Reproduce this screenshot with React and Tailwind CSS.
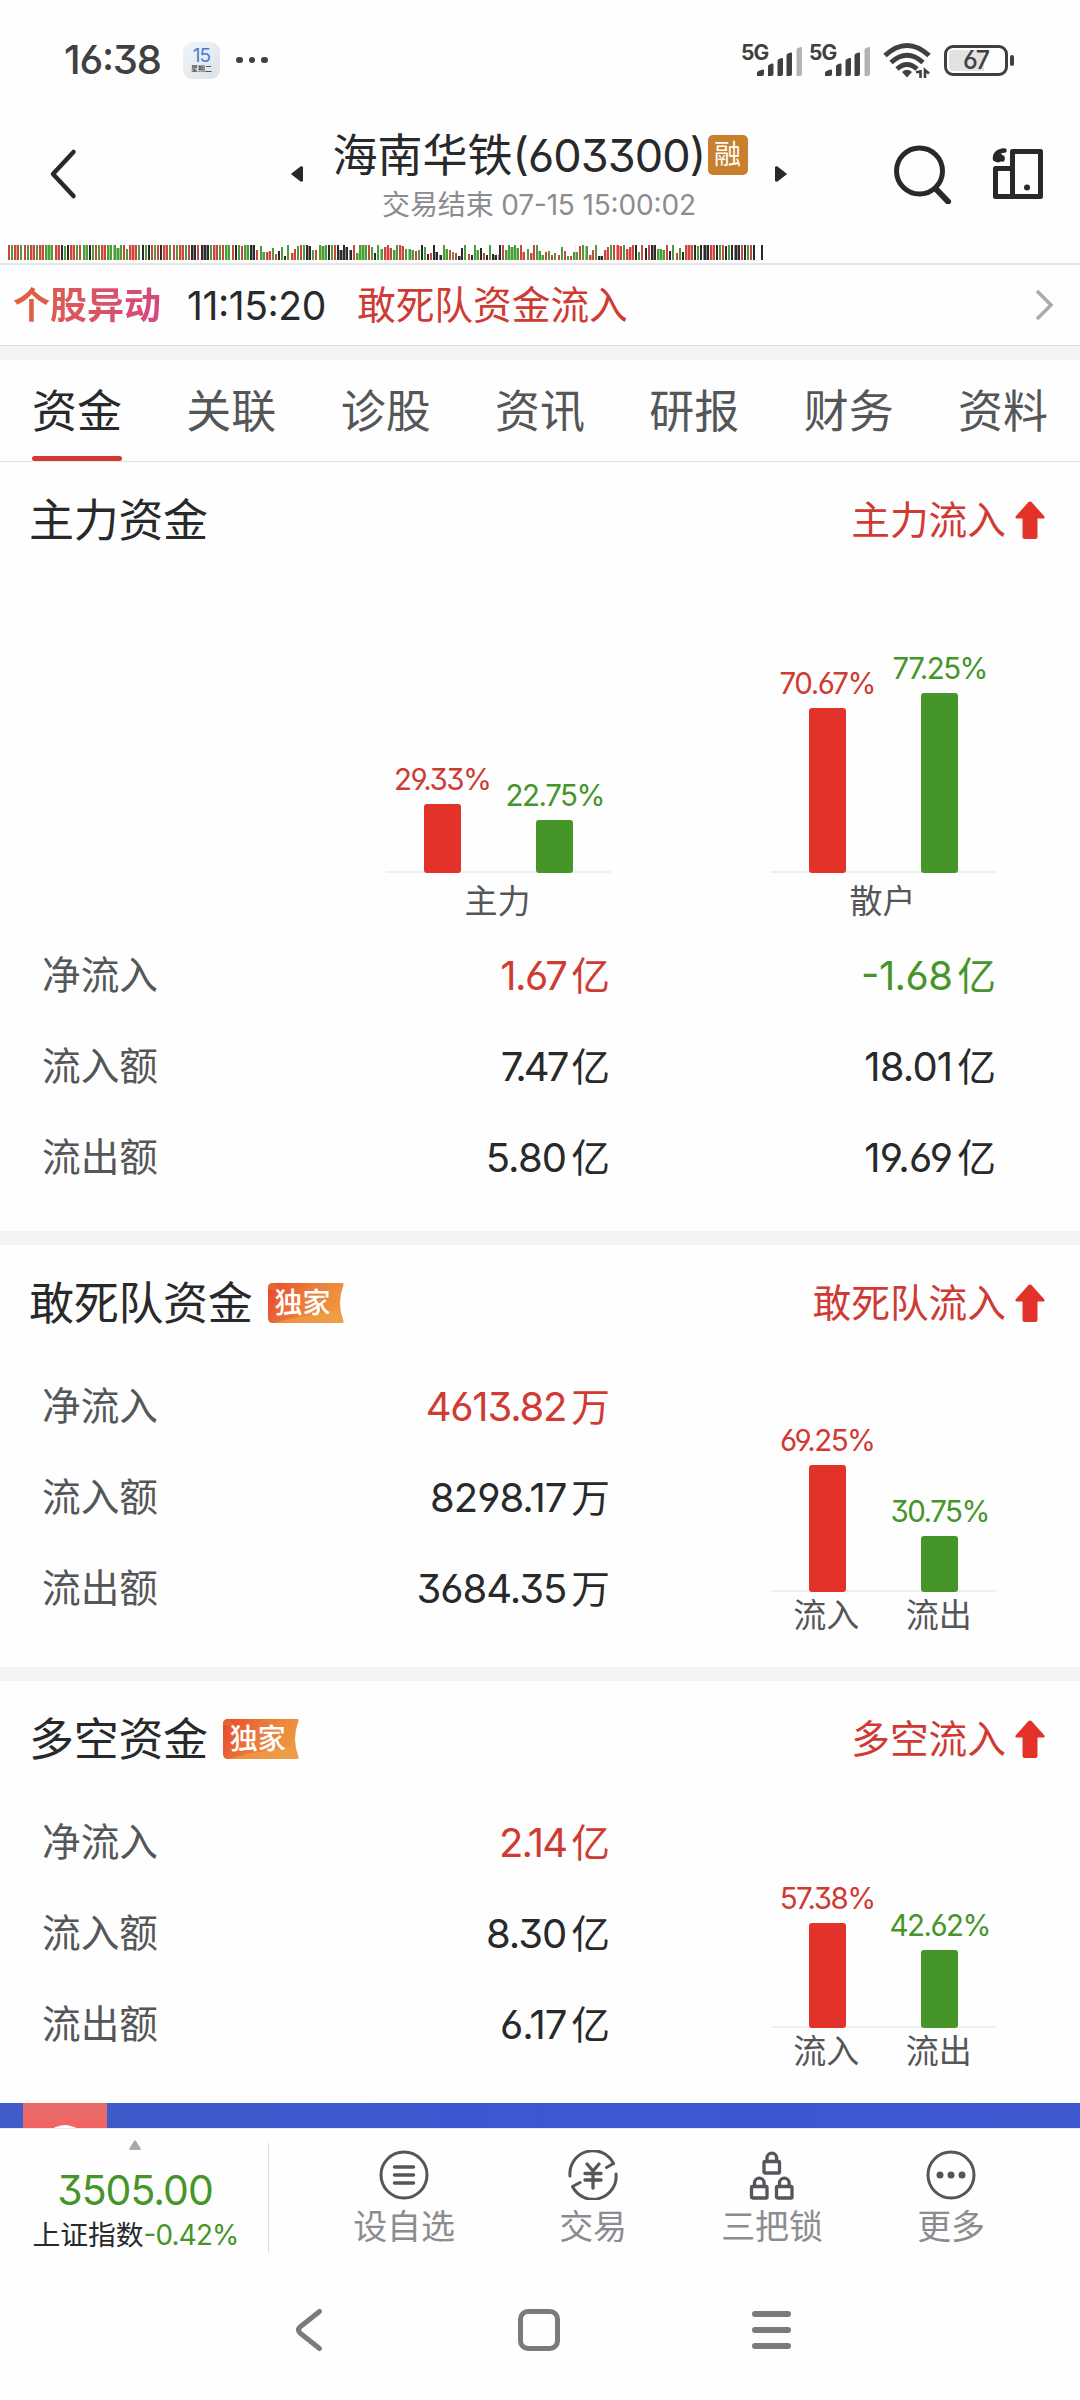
import { Fragment } from 'react'

const TABS = ['资金', '关联', '诊股', '资讯', '研报', '财务', '资料']

// one tick per trading minute: colour letter + height
const TICKS =
  'r15g15r15r15g15r15g15r15r15g15r15r15g15g15g15r15r15k15g14k15r15r15g15r15g15g15k15g15r15g15r15r15g15g15g15g12g15r15g11r15r15r15g15k15g15k15r15g15r15k15r15r15g15r15g15r15r15g15r15k15k15r15k15k15k15g15r15r15g15r15g15g15r15k15g15r14g15g15k15k15' +
  'r10g14g8r8r9g12r6k9g13k4g15r7r11g14r15g15k15k14g10r10g15g14g15k15g15r15k15k10k15k13k10r15g7g15g15g15r15g13k7g15g11r13r15r12g10g15r15r14g11g11g10r9g10k15g13k6r7k15k8k5g15g11r10g8r7k4k12g15r6k5g15g10k12r7k5g15k6k5k15r15g10g15g13g15g12r15r8g11r7r15g15g9g5r8g9r5g7r5g13r9g4r4g8g8r14g15g14r5r10g15k4k4r10r13g15r15r15r14g15r11r13r15k15g8r15k12r15k15k15g11g11g10r15k9g15r7g12k8' +
  'r15r15r15k15g14k15k15k15r15r15k15g15r15k14g15k15k15k15r15k15g15r15k15'

const TICK_COLORS = { r: '#c8483f', g: '#4f9a3c', k: '#2b2b2d' }
const TICK_SOFT = { r: '#f39a96', g: '#93d084', k: '#8d8d90' }

const SECTIONS = [
  {
    title: '敢死队资金',
    flow: '敢死队流入',
    rows: [
      ['净流入', '4613.82', '万', 'text-[#cf3b33] tracking-[-1.2px]'],
      ['流入额', '8298.17', '万', 'text-[#28292a] tracking-[-1px]'],
      ['流出额', '3684.35', '万', 'text-[#28292a] tracking-[-1px]'],
    ],
    bars: [
      { label: '流入', value: '69.25%', height: 127, up: true },
      { label: '流出', value: '30.75%', height: 56, up: false },
    ],
  },
  {
    title: '多空资金',
    flow: '多空流入',
    rows: [
      ['净流入', '2.14', '亿', 'text-[#cf3b33] tracking-[-1.8px]'],
      ['流入额', '8.30', '亿', 'text-[#28292a] tracking-[-1px]'],
      ['流出额', '6.17', '亿', 'text-[#28292a] tracking-[-1px]'],
    ],
    bars: [
      { label: '流入', value: '57.38%', height: 105, up: true },
      { label: '流出', value: '42.62%', height: 78, up: false },
    ],
  },
]

const MAIN_ROWS = [
  ['净流入', ['1.67', 'text-[#cf3b33] tracking-[-1.5px]'], ['-1.68', 'text-[#459529] tracking-[-0.6px]']],
  ['流入额', ['7.47', 'text-[#28292a] tracking-[-3px]'], ['18.01', 'text-[#28292a] tracking-[-0.8px]']],
  ['流出额', ['5.80', 'text-[#28292a] tracking-[-0.8px]'], ['19.69', 'text-[#28292a] tracking-[-0.8px]']],
]

const Signal = () => (
  <div className="relative h-[34px] w-[62px]">
    <span className="absolute -top-px left-0 text-[21px] leading-none font-bold tracking-[-1px]">5G</span>
    <svg className="absolute bottom-0 left-0" width="62" height="34" viewBox="0 0 62 34">
      <path d="M16 33v-3q0-1.500 1.500-2l4-1.500q1.500-.5 1.500 1V31q0 2-2 2z" fill="currentColor" />
      <path d="M27 33v-9.500q0-1.500 1.500-2l2.500-1q1.500-.5 1.500 1V31q0 2-2 2z" fill="currentColor" />
      <path d="M36.500 33V18q0-1.500 1.500-2l2.500-1q1.500-.5 1.500 1v15q0 2-2 2z" fill="currentColor" />
      <path d="M45.500 33V12.500q0-1.500 1.500-2l2.500-1q1.500-.5 1.500 1V31q0 2-2 2z" fill="currentColor" />
      <path d="M55.500 33V7q0-1.500 1.500-2l2.500-1q1.500-.5 1.500 1v26q0 2-2 2z" fill="#b3b3b3" />
    </svg>
  </div>
)

const StatusBar = () => (
  <div className="flex h-[120px] items-center justify-between pr-[66px] pl-[64px] text-[#404040]">
    <div className="flex items-center">
      <span className="w-[119px] text-[40px] leading-none font-medium tracking-[-1.2px]">16:38</span>
      <div className="flex size-[37px] flex-col items-center justify-center rounded-[9px] bg-gradient-to-br from-[#f1f5f8] to-[#dbe3e9]">
        <span className="text-[19px] leading-[18px] tracking-[-1px] text-[#4a7bd0]">15</span>
        <span className="text-[7px] leading-[8px] font-medium text-[#333]">星期二</span>
      </div>
      <div className="ml-[16px] flex gap-[6px]">
        <i className="size-[6.500px] rounded-full bg-[#404040]" />
        <i className="size-[6.500px] rounded-full bg-[#404040]" />
        <i className="size-[6.500px] rounded-full bg-[#404040]" />
      </div>
    </div>
    <div className="flex items-center">
      <div className="flex gap-[6px]">
        <Signal />
        <Signal />
      </div>
      <svg className="ml-[12px]" width="48" height="36" viewBox="0 0 48 36" fill="none" stroke="currentColor" strokeWidth="5">
        <path d="M2 13.500Q24-6.500 46 13.500" />
        <path d="M8 20.500Q24 6 40 20.500" />
        <path d="M14 27Q24 18 34 27" />
        <path d="M19 30Q24 25.500 29 30L24 35.500Z" fill="currentColor" stroke="none" />
        <path d="M33 30h4.500v5M37.500 28v8M42 36v-8l4 3.500" strokeWidth="2.600" />
      </svg>
      <div className="ml-[13px] flex items-center gap-[2px]">
        <div className="relative flex h-[31px] w-[64px] items-center justify-center rounded-[9px] border-[3.500px] border-[#404040]">
          <div className="absolute inset-y-[2px] left-[2px] w-[35px] rounded-l-[4px] bg-[#e2e2e2]" />
          <span className="relative text-[25px] leading-none font-medium tracking-[-1px]">67</span>
        </div>
        <div className="h-[11px] w-[4px] rounded-[2px] bg-[#404040]" />
      </div>
    </div>
  </div>
)

const Header = () => (
  <div className="flex h-[108px] items-center justify-between pr-[36px] pl-[49px] text-[#28292a]">
    <svg width="30" height="52" viewBox="0 0 30 52" fill="none" stroke="currentColor" strokeWidth="4.500" strokeLinecap="round" strokeLinejoin="round">
      <path d="M24.500 4L4 26l20.500 22" />
    </svg>
    <div className="ml-[105px] flex items-center">
      <svg className="mr-[30px]" width="12" height="16" viewBox="0 0 12 16" fill="currentColor">
        <path d="M12 1v14q-1 1-2.500.5L.5 8.500q-.5-.5 0-1l9-7Q11-.2 12 1z" />
      </svg>
      <div className="flex flex-col items-center pt-[5px]">
        <div className="flex h-[42px] items-center">
          <h1 className="w-[375px] text-[45px] leading-none whitespace-nowrap">
            海南华铁<span className="tracking-[-0.9px]">(603300)</span>
          </h1>
          <span className="mb-[2px] flex size-[40px] items-center justify-center rounded-[5px] bg-[#c8802f] text-[27px] leading-none text-white">融</span>
        </div>
        <p className="mt-[14px] mr-[2px] text-[28px] leading-none tracking-[-0.15px] whitespace-nowrap text-[#8c8c90]">交易结束 07-15 15:00:02</p>
      </div>
      <svg className="ml-[27px]" width="12" height="16" viewBox="0 0 12 16" fill="currentColor">
        <path d="M0 1v14q1 1 2.500.5l9-7q.5-.5 0-1l-9-7Q1-.2 0 1z" />
      </svg>
    </div>
    <div className="flex items-center gap-[40px]">
      <svg width="59" height="60" viewBox="0 0 59 60" fill="none" stroke="currentColor" strokeWidth="5">
        <circle cx="26.500" cy="27" r="23" />
        <path d="M43 45l12 12.500" strokeWidth="6" strokeLinecap="round" />
      </svg>
      <svg width="52" height="52" viewBox="0 0 52 52" fill="none" stroke="currentColor" strokeWidth="5" strokeLinejoin="round">
        <path d="M20.500 3.500h28v45h-28z" />
        <path d="M20.500 20.500h-17v28h17" />
        <path d="M3 11Q3 3 12.500 2.500" strokeWidth="4.500" strokeLinecap="round" />
        <circle cx="6" cy="9.500" r="5" fill="currentColor" stroke="none" />
        <path d="M10.500 9.500v2" strokeWidth="4.500" strokeLinecap="round" />
        <circle cx="35" cy="39.500" r="3" fill="currentColor" stroke="none" />
      </svg>
    </div>
  </div>
)

const ticks = TICKS.match(/[rgk]\d+/g).map((t, i) => ({
  x: 8 + Math.round(i * 3.105),
  kind: t[0],
  h: Number(t.slice(1)),
}))

const TickStrip = () => (
  <div className="h-[37px] border-b-2 border-[#e5e5e5] pt-[17px]">
    <svg className="block" width="1080" height="18" shapeRendering="crispEdges">
      <path d="M195.500 15v3M385.500 15v3M575.500 0v18M753 15h8" stroke="#ececec" />
      {ticks.map(({ x, kind, h }, i) => {
        const prev = ticks[i - 1]
        const joined = prev && prev.kind === kind
        return (
          <Fragment key={i}>
            {joined && <rect x={x - 1} y={15 - Math.min(h, prev.h)} width="1" height={Math.min(h, prev.h)} fill={TICK_SOFT[kind]} />}
            <rect x={x} y={15 - h} width="2" height={h} fill={TICK_COLORS[kind]} />
          </Fragment>
        )
      })}
      <rect x="761" y="0" width="2" height="15" fill={TICK_COLORS.k} />
    </svg>
  </div>
)

const Alert = () => (
  <div className="flex h-[81px] items-center border-b border-[#dedede] pl-[13px]">
    <span className="mt-[2px] w-[174px] bg-gradient-to-r from-[#e0603a] to-[#d5487f] to-[146px] bg-clip-text text-[37px] leading-[48px] font-bold text-transparent">个股异动</span>
    <span className="mt-px w-[170px] text-[39px] leading-none tracking-[-0.4px] text-[#28292a]">11:15:20</span>
    <span className="mt-px text-[38.700px] leading-none text-[#cf3b33]">敢死队资金流入</span>
    <svg className="mr-[26px] ml-auto" width="20" height="34" viewBox="0 0 20 34" fill="none" stroke="#aaa" strokeWidth="3.500">
      <path d="M3 3l14 14L3 31" />
    </svg>
  </div>
)

const Tabs = () => (
  <div className="flex h-[102px] justify-between border-b border-[#e2e2e2] px-8">
    {TABS.map((t, i) => (
      <div
        key={t}
        className={
          i === 0
            ? 'relative flex items-center pt-px text-[45px] leading-none text-[#28292a]'
            : 'flex items-center pt-px text-[45px] leading-none text-[#555657]'
        }
      >
        {t}
        {i === 0 && <div className="absolute bottom-0 left-0 h-[5px] w-full rounded-full bg-[#d03a31]" />}
      </div>
    ))}
  </div>
)

const UpArrow = () => (
  <svg className="-mt-px ml-[9px]" width="30" height="38" viewBox="0 0 30 38" fill="#e23229">
    <path d="M13.500 1q1.500-1.200 3 0l12.500 14q1.500 2-.5 2.500H22.500V36q0 2-2 2h-11q-2 0-2-2V17.500H1.500Q-.5 17 1 15z" />
  </svg>
)

const Badge = () => (
  <div className="relative ml-[15px] h-[40px] w-[76px]">
    <svg className="absolute inset-0" width="76" height="40" viewBox="0 0 76 40">
      <defs>
        <linearGradient id="badge" x1="0" y1="0.200" x2="1" y2="0.500">
          <stop offset="0" stopColor="#e94b2d" />
          <stop offset="0.500" stopColor="#ea7c3b" />
          <stop offset="1" stopColor="#ee983f" />
        </linearGradient>
      </defs>
      <path d="M5 0h69q2 0 1.500 2-7 18 0 36 .5 2-1.500 2H5q-5 0-5-5V5q0-5 5-5z" fill="url(#badge)" />
      <path d="M0 6Q0 0 6 0l8 8z" fill="#e2662f" />
      <path d="M5 40l20-5 45-8 5 13z" fill="#f0a24a" opacity="0.600" />
    </svg>
    <span className="relative block pl-[7px] text-[28px] leading-[41px] font-medium text-white">独家</span>
  </div>
)

const SectionHeader = ({ title, flow, exclusive }) => (
  <div className="flex h-[116px] items-center pr-[35px] pl-[29px]">
    <h2 className="text-[45px] leading-none tracking-[-0.300px] text-[#28292a]">{title}</h2>
    {exclusive && <Badge />}
    <span className="ml-auto text-[38.700px] leading-none text-[#cf3b33]">{flow}</span>
    <UpArrow />
  </div>
)

const Bar = ({ value, height, up }) => (
  <div className="flex w-1/2 flex-col items-center">
    <span className={up ? 'mb-[10px] text-[29.500px] leading-[30px] tracking-[-1.500px] text-[#cf3b33]' : 'mb-[10px] text-[29.500px] leading-[30px] tracking-[-1.500px] text-[#459529]'}>
      {value}
    </span>
    <div className={up ? 'w-[37px] rounded-[3px] bg-[#e23229]' : 'w-[37px] rounded-[3px] bg-[#459529]'} style={{ height }} />
  </div>
)

const BarPair = ({ bars }) => (
  <div className="flex w-[225px] items-end bg-[linear-gradient(#efefef,#efefef)] bg-[length:100%_2px] bg-bottom bg-no-repeat">
    {bars.map((b) => (
      <Bar key={b.value} {...b} />
    ))}
  </div>
)

const Amount = ({ num, unit, color }) => (
  <span>
    <span className={`text-[40px] ${color}`}>{num}</span>
    <span className={`ml-[5px] text-[38.700px] ${color}`}>
      <span className="tracking-normal">{unit}</span>
    </span>
  </span>
)

const MainFunds = () => (
  <section className="h-[769px]">
    <SectionHeader title="主力资金" flow="主力流入" />
    <div className="flex h-[352px] items-end gap-[160px] pb-[12px] pl-[386px]">
      <div>
        <BarPair
          bars={[
            { value: '29.33%', height: 69, up: true },
            { value: '22.75%', height: 53, up: false },
          ]}
        />
        <p className="mt-[10px] h-[35px] pr-[2px] text-center text-[33px] leading-[36px] text-[#555657]">主力</p>
      </div>
      <div>
        <BarPair
          bars={[
            { value: '70.67%', height: 165, up: true },
            { value: '77.25%', height: 180, up: false },
          ]}
        />
        <p className="mt-[10px] h-[35px] pr-[2px] text-center text-[33px] leading-[36px] text-[#555657]">散户</p>
      </div>
    </div>
    {MAIN_ROWS.map(([label, main, retail]) => (
      <div key={label} className="flex h-[91px] items-center pl-[42px] leading-none">
        <span className="w-[200px] text-[38.700px] text-[#555657]">{label}</span>
        <div className="w-[368px] text-right">
          <Amount num={main[0]} unit="亿" color={main[1]} />
        </div>
        <div className="w-[386px] text-right">
          <Amount num={retail[0]} unit="亿" color={retail[1]} />
        </div>
      </div>
    ))}
  </section>
)

const FundSection = ({ title, flow, rows, bars }) => (
  <section className="h-[422px]">
    <SectionHeader title={title} flow={flow} exclusive />
    <div className="flex h-[273px]">
      <div className="w-[610px]">
        {rows.map(([label, num, unit, color]) => (
          <div key={label} className="flex h-[91px] items-center justify-between pl-[42px] leading-none">
            <span className="text-[38.700px] text-[#555657]">{label}</span>
            <Amount num={num} unit={unit} color={color} />
          </div>
        ))}
      </div>
      <div className="ml-[161px] flex flex-col justify-end">
        <BarPair bars={bars} />
        <div className="mt-[6px] mb-[1px] flex h-[35px] text-[33px] leading-[35px] text-[#555657]">
          {bars.map((b) => (
            <span key={b.label} className="w-1/2 pr-[2px] text-center">{b.label}</span>
          ))}
        </div>
      </div>
    </div>
  </section>
)

const Banner = () => (
  <div className="h-[25px] overflow-hidden bg-gradient-to-r from-[#3f5cc8] via-[#3b57d2] to-[#3d58cf] pl-[23px]">
    <div className="flex h-full w-[84px] justify-center bg-gradient-to-b from-[#e66b6b] to-[#f26464]">
      <div className="mt-[22px] size-[44px] shrink-0 rounded-full bg-white" />
    </div>
  </div>
)

const WatchIcon = () => (
  <svg width="50" height="50" viewBox="0 0 50 50" fill="none" stroke="#55555b" strokeWidth="3" strokeLinecap="round">
    <circle cx="25" cy="25" r="23" />
    <path d="M15.500 17h19M15.500 25h19M15.500 33h19" strokeWidth="3.500" />
  </svg>
)

const TradeIcon = () => (
  <svg width="50" height="50" viewBox="0 0 50 50" fill="none" stroke="#55555b" strokeWidth="3" strokeLinecap="round" strokeLinejoin="round">
    <path d="M2 26A23 23 0 0 1 45.500 13.500L38.500 17.500" />
    <path d="M48 24A23 23 0 0 1 4.500 36.500L12 32.500" />
    <path d="M19 14l6 7 6-7M25 21v17M17 23.500h16M17 30h16" strokeWidth="3.300" />
  </svg>
)

const Lock = ({ x, y }) => (
  <g transform={`translate(${x} ${y})`}>
    <rect x="1.500" y="10.500" width="15.500" height="11.500" rx="1" />
    <path d="M4.500 10.500V7a4.800 4.800 0 0 1 9.600 0v3.500" />
  </g>
)

const LocksIcon = () => (
  <svg width="50" height="50" viewBox="0 0 50 50" fill="none" stroke="#55555b" strokeWidth="3.300">
    <Lock x={15.500} y={1} />
    <Lock x={3} y={26} />
    <Lock x={28} y={26} />
  </svg>
)

const MoreIcon = () => (
  <svg width="50" height="50" viewBox="0 0 50 50" fill="none" stroke="#55555b" strokeWidth="3">
    <circle cx="25" cy="25" r="23" />
    <g fill="#55555b" stroke="none">
      <circle cx="14" cy="25" r="3.500" />
      <circle cx="25" cy="25" r="3.500" />
      <circle cx="36" cy="25" r="3.500" />
    </g>
  </svg>
)

const ACTIONS = [
  { label: '设自选', icon: <WatchIcon />, width: 'w-[200px]' },
  { label: '交易', icon: <TradeIcon />, width: 'w-[178px]' },
  { label: '三把锁', icon: <LocksIcon />, width: 'w-[180px]' },
  { label: '更多', icon: <MoreIcon />, width: 'w-[178px]' },
]

const BottomBar = () => (
  <div className="flex h-[137px] border-t border-[#e8e8ee]">
    <div className="mt-[14px] flex h-[110px] w-[269px] flex-col items-center border-r border-[#dcdcdc] pl-[2px] leading-none">
      <svg className="-mt-[3px] block" width="12" height="10" viewBox="0 0 12 10" fill="#a9a9ab">
        <path d="M5 1q1-1.500 2 0l4.500 7q.5 2-1 2H1.500Q0 10 .5 8z" />
      </svg>
      <div className="mt-[19px] text-[41px] leading-[42px] tracking-[-1px] text-[#459529]">3505.00</div>
      <div className="mt-[10px] pl-px text-[27.800px] leading-[28px] whitespace-nowrap text-[#28292a]">
        上证指数<span className="tracking-[-0.800px] text-[#459529]">-0.42%</span>
      </div>
    </div>
    <div className="flex pt-[21px] pl-[35px]">
      {ACTIONS.map((a) => (
        <div key={a.label} className={`${a.width} flex flex-col items-center`}>
          {a.icon}
          <span className="mt-[10px] text-[34px] leading-[34px] tracking-[-0.2px] text-[#8c8c90]">{a.label}</span>
        </div>
      ))}
    </div>
  </div>
)

const NavBar = () => (
  <div className="flex h-[130px] items-center justify-between pr-[287px] pb-px pl-[293px] text-[#7b7b7b]">
    <svg width="32" height="46" viewBox="0 0 32 46" fill="none" stroke="currentColor" strokeWidth="5" strokeLinecap="round" strokeLinejoin="round">
      <path d="M26.500 4.500L7 20q-3 3 0 6l19.500 15.500" />
    </svg>
    <div className="ml-px size-[42px] rounded-[10px] border-[5px] border-[#7b7b7b]" />
    <svg width="42" height="42" viewBox="0 0 42 42" fill="none" stroke="currentColor" strokeWidth="6" strokeLinecap="round">
      <path d="M4 5h33M4 21h33M4 37h33" />
    </svg>
  </div>
)

export default function App() {
  return (
    <div className="h-[2400px] w-[1080px] overflow-hidden bg-[#fefefe] font-['Inter','Noto_Sans_CJK_SC',sans-serif] [font-feature-settings:'cv03','cv04','cv09','calt','case']">
      <StatusBar />
      <Header />
      <TickStrip />
      <Alert />
      <div className="h-[14px] bg-[#f4f4f4]" />
      <Tabs />
      <MainFunds />
      {SECTIONS.map((s) => (
        <div key={s.title}>
          <div className="h-[14px] bg-[#f4f4f4]" />
          <FundSection {...s} />
        </div>
      ))}
      <Banner />
      <BottomBar />
      <NavBar />
    </div>
  )
}
